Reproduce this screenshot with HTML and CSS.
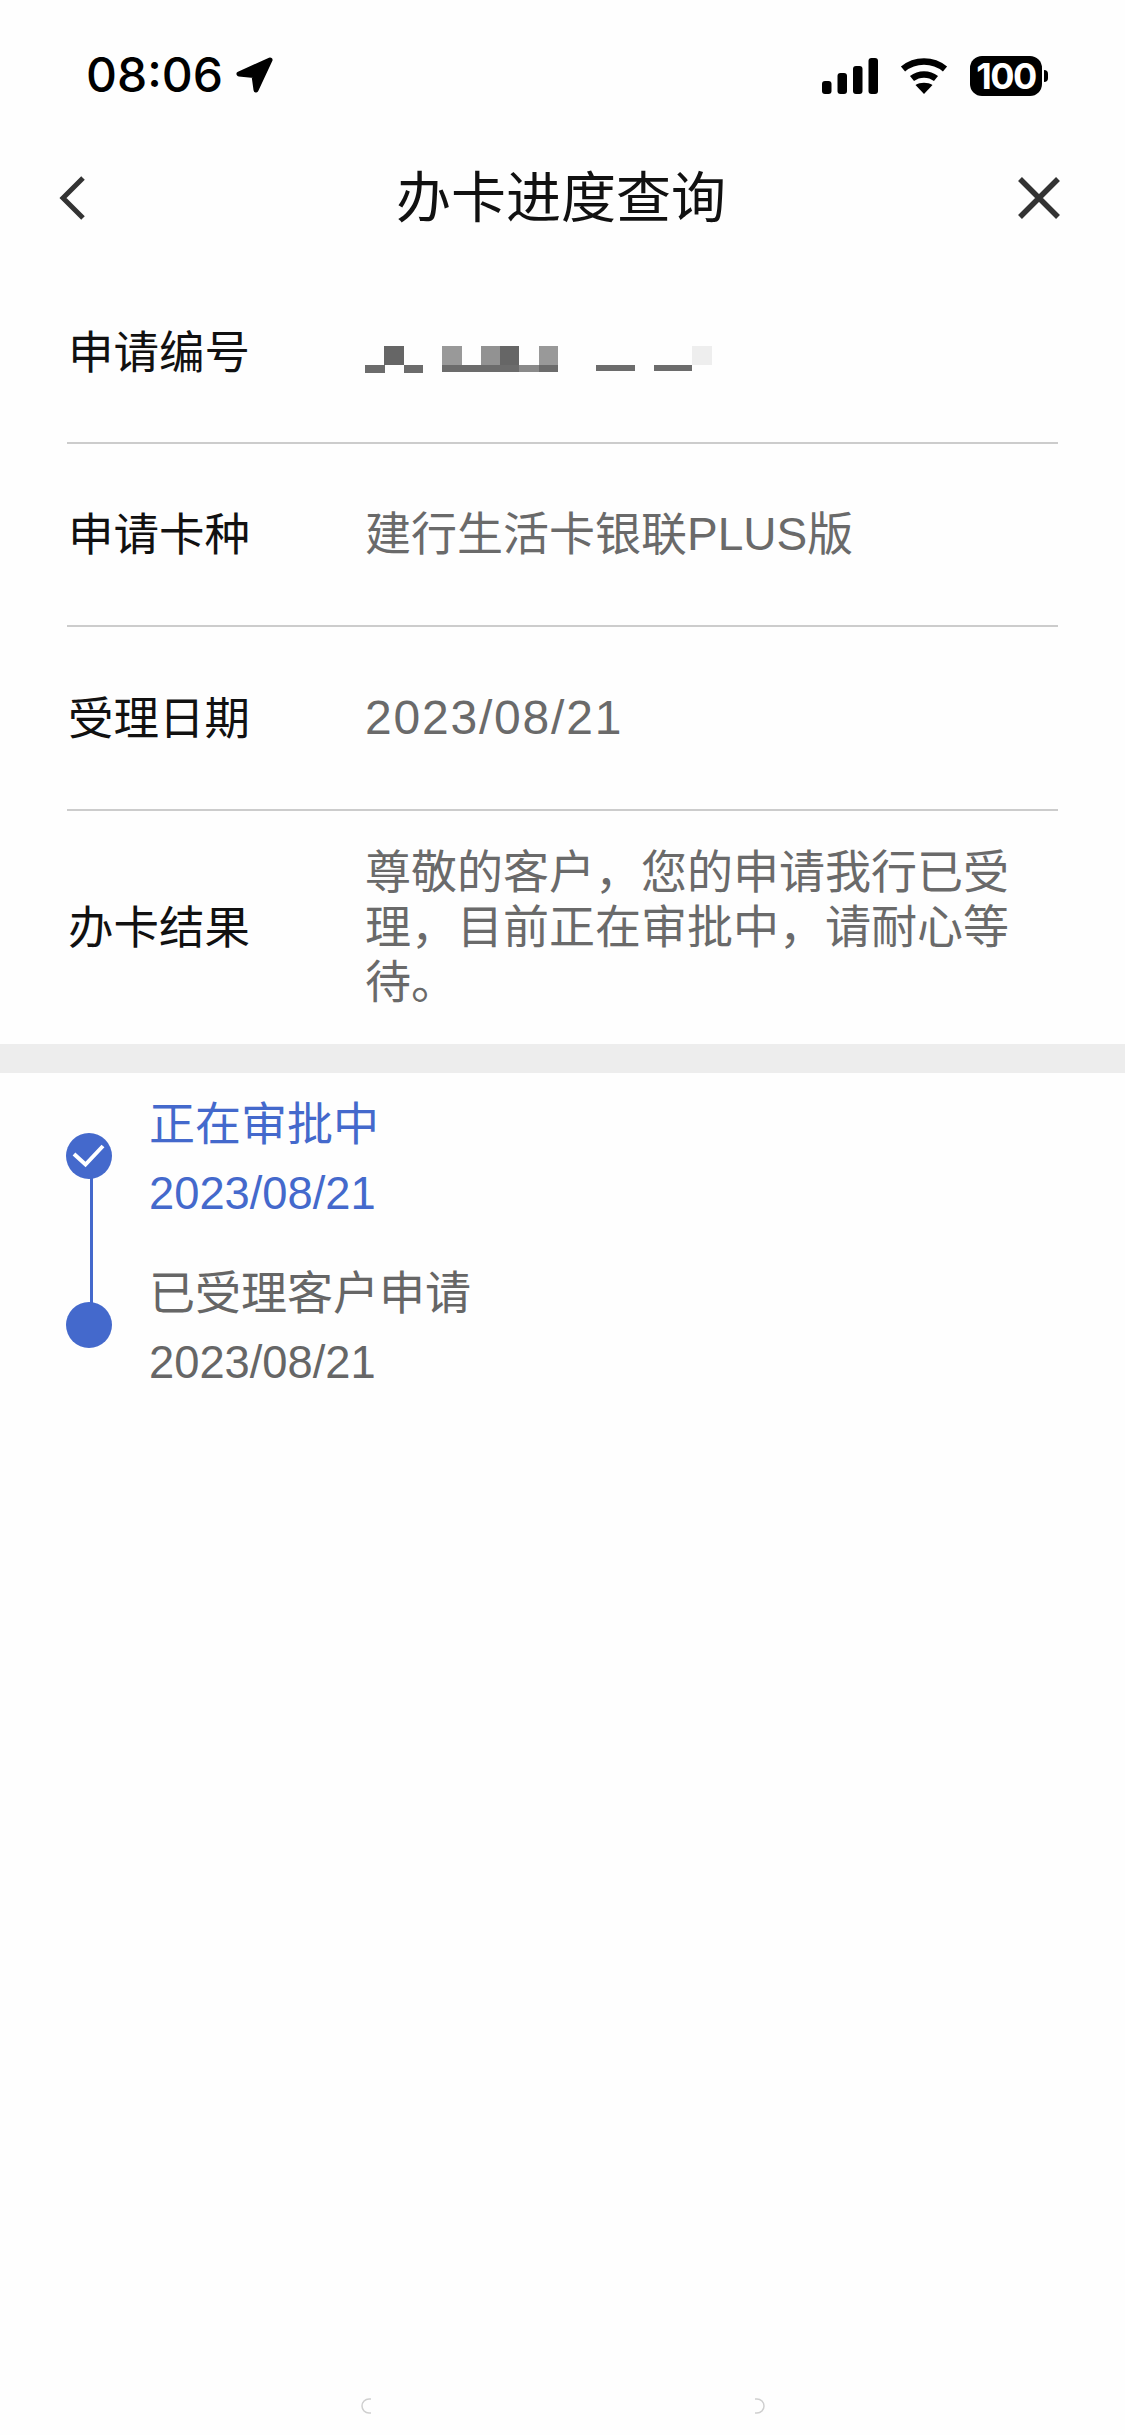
FILE: index.html
```html
<!DOCTYPE html>
<html>
<head lang="zh">
    <meta charset="UTF-8">
    <title>办卡进度查询</title>
    <link rel="stylesheet" href="styles.css">
</head>
<body>
    <div id="page">
        <div class="status">
            <div class="status-left">
                <span class="time">08:06</span>
                <svg class="arrow" width="37" height="36" viewBox="0 0 37 36">
                    <path d="M34 3 L3 17 L18 18.5 L20 33 Z" fill="#000" stroke="#000" stroke-width="5" stroke-linejoin="round"/>
                </svg>
            </div>
            <div class="status-right">
                <svg class="signal" width="56" height="36" viewBox="0 0 56 36">
                    <rect x="0" y="23" width="9.5" height="13" rx="3"/>
                    <rect x="15.5" y="15" width="9.5" height="21" rx="3"/>
                    <rect x="31" y="8" width="9.5" height="28" rx="3"/>
                    <rect x="46.500" y="0" width="9.5" height="36" rx="3"/>
                </svg>
                <svg class="wifi" width="48" height="36" viewBox="0 0 48 36">
                    <path d="M3 11 C15 1 33 1 45 11" fill="none" stroke="#000" stroke-width="6.500"/>
                    <path d="M12 20.500 C19 15 29 15 36 20.500" fill="none" stroke="#000" stroke-width="6.500"/>
                    <path d="M15.500 27 C20 24 28 24 32.500 27 L24 36 Z" fill="#000"/>
                </svg>
                <div class="battery">
                    <span class="battery-body">100</span>
                    <span class="battery-nub"></span>
                </div>
            </div>
        </div>

        <div class="navbar">
            <svg class="nav-icon" width="40" height="46" viewBox="0 0 40 46">
                <path d="M30 3 L10 23 L30 43" fill="none" stroke="#333" stroke-width="5"/>
            </svg>
            <div class="nav-title">办卡进度查询</div>
            <svg class="nav-icon" width="44" height="44" viewBox="0 0 44 44">
                <path d="M3 3 L41 41 M41 3 L3 41" fill="none" stroke="#333" stroke-width="5.500"/>
            </svg>
        </div>

        <div class="info">
            <div class="row row-first">
                <div class="label">申请编号</div>
                <svg class="mosaic" width="348" height="28" viewBox="0 0 348 28">
                    <rect x="19" y="0" width="20" height="19" fill="#666"/>
                    <rect x="0" y="19" width="20" height="8" fill="#6c6c6c"/>
                    <rect x="39" y="19" width="19" height="8" fill="#6c6c6c"/>
                    <rect x="77" y="0" width="20" height="19" fill="#999"/>
                    <rect x="116" y="0" width="19" height="19" fill="#929292"/>
                    <rect x="135" y="0" width="19" height="19" fill="#666"/>
                    <rect x="174" y="0" width="19" height="19" fill="#999"/>
                    <rect x="77" y="19" width="116" height="7" fill="#6c6c6c"/>
                    <rect x="154" y="19" width="20" height="7" fill="#8a8a8a"/>
                    <rect x="231" y="19" width="39" height="6" fill="#6c6c6c"/>
                    <rect x="289" y="19" width="38" height="6" fill="#6c6c6c"/>
                    <rect x="327" y="0" width="20" height="19" fill="#eee"/>
                </svg>
            </div>
            <div class="row">
                <div class="label">申请卡种</div>
                <div class="value">建行生活卡银联PLUS版</div>
            </div>
            <div class="row">
                <div class="label">受理日期</div>
                <div class="value value-date">2023/08/21</div>
            </div>
            <div class="row row-last">
                <div class="label">办卡结果</div>
                <div class="value value-long">尊敬的客户，您的申请我行已受理，目前正在审批中，请耐心等待。</div>
            </div>
        </div>

        <div class="band"></div>

        <div class="timeline">
            <div class="line"></div>
            <div class="step step-now">
                <div class="dot">
                    <svg width="46" height="46" viewBox="0 0 46 46">
                        <path d="M8 21 L19.500 31.500 L37 13" fill="none" stroke="#fff" stroke-width="4"/>
                    </svg>
                </div>
                <div class="step-text">
                    <div class="step-title">正在审批中</div>
                    <div class="step-date">2023/08/21</div>
                </div>
            </div>
            <div class="step">
                <div class="dot"></div>
                <div class="step-text">
                    <div class="step-title">已受理客户申请</div>
                    <div class="step-date">2023/08/21</div>
                </div>
            </div>
        </div>

        <div class="home">
            <svg width="406" height="18" viewBox="0 0 406 18">
                <path d="M11 2 H9 A7 7 0 0 0 9 16 H11" fill="none" stroke="#cfcfcf" stroke-width="1.500"/>
                <path d="M395 2 H397 A7 7 0 0 1 397 16 H395" fill="none" stroke="#cfcfcf" stroke-width="1.500"/>
            </svg>
        </div>
    </div>
</body>
</html>
```

FILE: styles.css
```css
*{
    margin: 0;
    padding: 0;
    box-sizing: border-box;
}
html,body{
    background: #fefefe;
}
body{
    font-family: "Liberation Sans", "Noto Sans CJK SC", sans-serif;
}
#page{
    width: 1125px;
    height: 2435px;
    display: flex;
    flex-direction: column;
    overflow: hidden;
}

/* status bar */
.status{
    height: 136px;
    padding: 56px 77px 0 86px;
    display: flex;
    justify-content: space-between;
    align-items: flex-start;
}
.status-left{
    display: flex;
    align-items: center;
    gap: 13px;
}
.time{
    font-family: Inter, sans-serif;
    font-weight: 500;
    font-size: 48px;
    line-height: 38px;
    color: #000;
}
.status-right{
    display: flex;
    align-items: center;
    gap: 22px;
}
.battery{
    display: flex;
    align-items: center;
    gap: 2px;
}
.battery-body{
    width: 72px;
    height: 40px;
    background: #000;
    border-radius: 12px;
    color: #fff;
    font-family: Inter, sans-serif;
    font-weight: 700;
    font-size: 36px;
    line-height: 40px;
    text-align: center;
    letter-spacing: -1.500px;
}
.battery-nub{
    width: 4px;
    height: 12px;
    background: #000;
    border-radius: 0 6px 6px 0;
}

/* title bar */
.navbar{
    height: 124px;
    padding: 0 64px 0 53px;
    display: flex;
    justify-content: space-between;
    align-items: center;
}
.nav-title{
    margin-left: 12px;
    font-size: 55px;
    line-height: 70px;
    color: #111;
}

/* info rows */
.info{
    padding: 0 67px;
}
.row{
    height: 183.500px;
    border-bottom: 2px solid #ccc;
    display: flex;
    align-items: center;
}
.row-first{
    padding-top: 2px;
}
.row-last{
    height: 233px;
    border-bottom: 0;
}
.label{
    width: 298px;
    padding: 3px 0 0 1px;
    flex-shrink: 0;
    font-size: 45.500px;
    line-height: 55px;
    color: #111;
}
.value{
    font-size: 46px;
    line-height: 55px;
    color: #6a6a6a;
}
.value-date{
    font-size: 48px;
    letter-spacing: 1.800px;
}
.value-long{
    width: 650px;
}
.mosaic{
    margin-top: 17px;
}

.band{
    height: 29px;
    background: #ededed;
}

/* progress */
.timeline{
    position: relative;
    padding: 16px 66px 0;
    display: flex;
    flex-direction: column;
    gap: 29px;
}
.line{
    position: absolute;
    left: 90px;
    top: 100px;
    width: 3px;
    height: 135px;
    background: #4469cc;
}
.step{
    display: flex;
    align-items: center;
    gap: 37px;
    color: #666;
}
.step-now{
    color: #4469cc;
}
.dot{
    position: relative;
    width: 46px;
    height: 46px;
    margin-top: -6px;
    border-radius: 50%;
    background: #4469cc;
    flex-shrink: 0;
}
.dot svg{
    display: block;
}
.step-title{
    font-size: 46px;
    line-height: 70px;
}
.step-date{
    font-size: 45.300px;
    line-height: 70px;
}

/* leftover of the home bar */
.home{
    margin-top: auto;
    padding: 0 0 20px 360px;
}
.home svg{
    display: block;
}
```
